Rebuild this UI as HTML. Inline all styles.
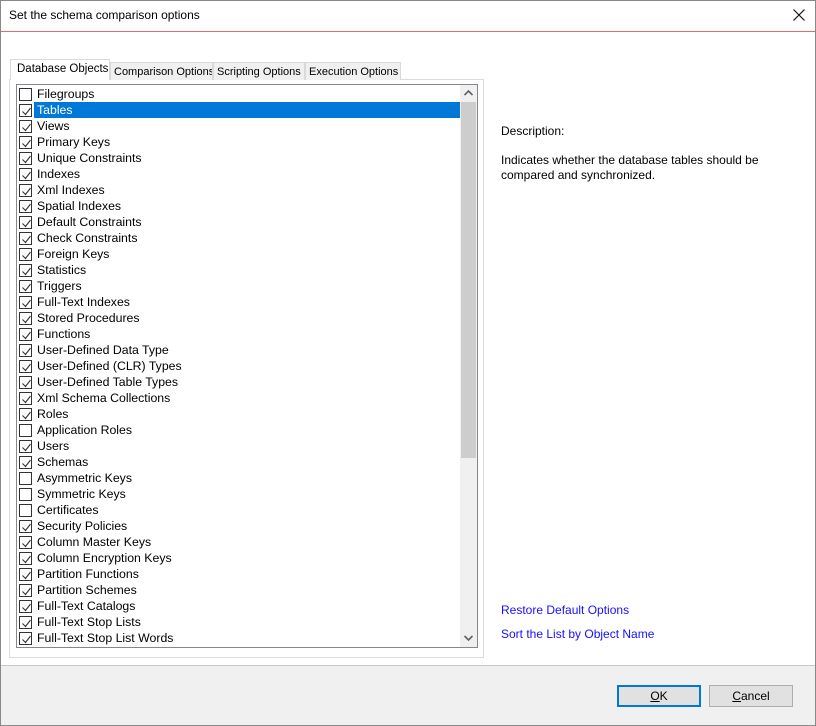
<!DOCTYPE html>
<html><head><style>
*{margin:0;padding:0;box-sizing:border-box}
body{width:816px;height:726px;background:#fff;font-family:"Liberation Sans",sans-serif;font-size:12px;color:#000;position:relative;overflow:hidden}
.frame{position:absolute;left:0;top:0;width:816px;height:726px;border:1px solid #888}
.title{position:absolute;left:9px;top:8px;font-size:12px}
.close{position:absolute;left:793px;top:9px}
.red{position:absolute;left:1px;right:1px;top:31px;height:1px;background:#e06c6c}
.tab{position:absolute;top:62px;height:18px;border:1px solid #d9d9d9;border-bottom:none;background:#f0f0f0;font-size:11px;padding:3px 0 0 3px;white-space:nowrap;overflow:hidden}
.tab.sel{top:59px;height:21px;background:#fff;z-index:2;padding:3px 0 0 6px;font-size:11.5px}
.page{position:absolute;left:9px;top:79px;width:475px;height:579px;border:1px solid #dcdcdc;background:#fff}
.list{position:absolute;left:16px;top:84px;width:462px;height:564px;border:1px solid #828790;background:#fff;overflow:hidden}
.row{position:absolute;left:0;height:16px;width:443px}
.cb{position:absolute;left:2px;top:2px;width:13px;height:13px;border:1px solid #333;background:#fff}
.cb svg{position:absolute;left:1px;top:1px}
.lbl{position:absolute;left:17px;top:0;height:16px;line-height:16px;padding-left:3px;width:426px;font-size:12.3px}
.row.hl .lbl{background:#0078d7;color:#fff}
.sb{position:absolute;left:443px;top:0;width:17px;height:562px;background:#f0f0f0}
.thumb{position:absolute;left:1px;top:17px;width:15px;height:356px;background:#cdcdcd}
.desc{position:absolute;left:501px;font-size:12px;line-height:15px}
.link{position:absolute;left:501px;color:#1a0dff;font-size:12px}
.footer{position:absolute;left:1px;right:1px;top:665px;bottom:1px;background:#f0f0f0;border-top:1px solid #c8c8c8}
.btn{position:absolute;top:685px;width:84px;height:22px;background:#e1e1e1;border:1px solid #adadad;text-align:center;line-height:20px}
.btn.ok{border:2px solid #0078d7;line-height:18px}
</style></head><body>
<div class="frame"></div>
<div class="title">Set the schema comparison options</div>
<svg class="close" width="12" height="12"><path d="M0.5 0.5 L11.5 11.5 M11.5 0.5 L0.5 11.5" stroke="#111" stroke-width="1.2"/></svg>
<div class="red"></div>
<div class="page"></div>
<div class="tab sel" style="left:10px;width:100px">Database Objects</div>
<div class="tab" style="left:110px;width:103px">Comparison Options</div>
<div class="tab" style="left:213px;width:92px">Scripting Options</div>
<div class="tab" style="left:305px;width:96px">Execution Options</div>
<div class="list" id="list">
<div class="sb"><svg style="position:absolute;left:4px;top:5px" width="9" height="6"><path d="M0.5 5 L4.5 1 L8.5 5" stroke="#606060" stroke-width="1.6" fill="none"/></svg><div class="thumb"></div><svg style="position:absolute;left:4px;top:550px" width="9" height="6"><path d="M0.5 1 L4.5 5 L8.5 1" stroke="#606060" stroke-width="1.6" fill="none"/></svg></div>
</div>
<div class="desc" style="top:124px">Description:</div>
<div class="desc" style="top:153px">Indicates whether the database tables should be<br>compared and synchronized.</div>
<div class="link" style="top:603px">Restore Default Options</div>
<div class="link" style="top:627px">Sort the List by Object Name</div>
<div class="footer"></div>
<div class="btn ok" style="left:617px"><u>O</u>K</div>
<div class="btn" style="left:709px"><u>C</u>ancel</div>
<script>
var items=[["Filegroups",0],["Tables",1],["Views",1],["Primary Keys",1],["Unique Constraints",1],["Indexes",1],["Xml Indexes",1],["Spatial Indexes",1],["Default Constraints",1],["Check Constraints",1],["Foreign Keys",1],["Statistics",1],["Triggers",1],["Full-Text Indexes",1],["Stored Procedures",1],["Functions",1],["User-Defined Data Type",1],["User-Defined (CLR) Types",1],["User-Defined Table Types",1],["Xml Schema Collections",1],["Roles",1],["Application Roles",0],["Users",1],["Schemas",1],["Asymmetric Keys",0],["Symmetric Keys",0],["Certificates",0],["Security Policies",1],["Column Master Keys",1],["Column Encryption Keys",1],["Partition Functions",1],["Partition Schemes",1],["Full-Text Catalogs",1],["Full-Text Stop Lists",1],["Full-Text Stop List Words",1]];
var l=document.getElementById('list'),h='';
items.forEach(function(it,i){
h+='<div class="row'+(i==1?' hl':'')+'" style="top:'+(1+i*16)+'px"><div class="cb">'+(it[1]?'<svg width="11" height="11"><path d="M1.5 5.5 L4.5 8.5 L9.5 2" stroke="#333" stroke-width="1.1" fill="none"/></svg>':'')+'</div><div class="lbl">'+it[0]+'</div></div>';
});
l.insertAdjacentHTML('afterbegin',h);
</script>
</body></html>
